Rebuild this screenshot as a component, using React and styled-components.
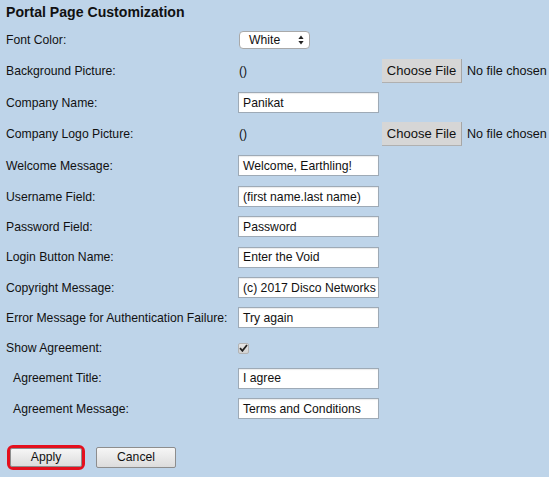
import styled, { createGlobalStyle } from 'styled-components';

const GlobalStyle = createGlobalStyle`
  html, body {
    margin: 0;
    padding: 0;
    background: #bed4e9;
  }
  body {
    font-family: "Liberation Sans", Arial, sans-serif;
    color: #111;
  }
`;

const Page = styled.div`
  width: 549px;
  height: 477px;
  box-sizing: border-box;
  padding: 3px 0 0 6px;
  overflow: hidden;
`;

const Title = styled.h1`
  margin: 0;
  font-size: 14.1px;
  font-weight: bold;
  line-height: 18px;
`;

const Form = styled.div`
  margin-top: 3px;
  display: grid;
  grid-template-columns: 233px 1fr;
`;

const Row = styled.div`
  display: contents;
`;

const Label = styled.div`
  height: ${(p) => p.$h}px;
  display: flex;
  align-items: center;
  font-size: 12.2px;
  white-space: nowrap;
  padding-left: ${(p) => (p.$indent ? '7px' : '0')};
`;

const Value = styled.div`
  height: ${(p) => p.$h}px;
  display: flex;
  align-items: center;
  font-size: 12.2px;
`;

const TextBox = styled.div`
  width: 141px;
  height: 21px;
  box-sizing: border-box;
  margin-left: -1px;
  background: #fff;
  border: 1px solid #9eaab6;
  box-shadow: inset 0 1px 1px rgba(0, 0, 0, 0.08);
  padding: 0 4px;
  display: flex;
  align-items: center;
  font-size: 12.2px;
  white-space: nowrap;
  overflow: hidden;
`;

const Select = styled.div`
  width: 71px;
  height: 18px;
  box-sizing: border-box;
  background: #fff;
  border: 1px solid #a9a9a9;
  border-radius: 4px;
  display: flex;
  align-items: center;
  justify-content: space-between;
  padding: 0 5px 0 9px;
  font-size: 12.2px;
`;

const Empty = styled.span`
  width: 143px;
`;

const FileButton = styled.div`
  width: 80px;
  height: 24px;
  box-sizing: border-box;
  background: #d6d6d6;
  border-right: 1px solid #a6a6a6;
  border-bottom: 1px solid #b0b0b0;
  display: flex;
  align-items: center;
  justify-content: center;
  font-size: 13px;
`;

const FileText = styled.span`
  margin-left: 5px;
  font-size: 12.6px;
  white-space: nowrap;
`;

const Check = styled.div`
  width: 11px;
  height: 11px;
  box-sizing: border-box;
  margin-left: -1px;
  border: 1px solid #b4b4b4;
  border-radius: 2px;
  background: linear-gradient(#e6e6e6, #d2d2d2);
  display: flex;
  align-items: center;
  justify-content: center;
`;

const Actions = styled.div`
  display: flex;
  align-items: center;
  gap: 11px;
  margin-top: 21px;
  margin-left: 1px;
`;

const Ring = styled.div`
  border: 3px solid #e4101e;
  border-radius: 6px;
`;

const Button = styled.div`
  width: ${(p) => p.$w}px;
  height: ${(p) => p.$h || 21}px;
  box-sizing: border-box;
  border: 1px solid #8d8d8d;
  border-radius: 2px;
  background: linear-gradient(#f6f6f6, #dcdcdc);
  display: flex;
  align-items: center;
  justify-content: center;
  font-size: 12.2px;
`;

const Arrows = () => (
  <svg width="6" height="10" viewBox="0 0 6 10">
    <path d="M3 0.5 L5.6 4 H0.4 Z" fill="#222" />
    <path d="M3 9.5 L5.6 6 H0.4 Z" fill="#222" />
  </svg>
);

const Tick = () => (
  <svg width="9" height="8" viewBox="0 0 9 8">
    <path d="M1 4.2 L3.4 6.8 L8 1" fill="none" stroke="#222" strokeWidth="1.8" />
  </svg>
);

const FileControl = () => (
  <>
    <Empty>()</Empty>
    <FileButton>Choose File</FileButton>
    <FileText>No file chosen</FileText>
  </>
);

const fields = [
  { label: 'Font Color:', select: 'White' },
  { label: 'Background Picture:', file: true },
  { label: 'Company Name:', value: 'Panikat' },
  { label: 'Company Logo Picture:', file: true },
  { label: 'Welcome Message:', value: 'Welcome, Earthling!' },
  { label: 'Username Field:', value: '(first name.last name)' },
  { label: 'Password Field:', value: 'Password' },
  { label: 'Login Button Name:', value: 'Enter the Void' },
  { label: 'Copyright Message:', value: '(c) 2017 Disco Networks' },
  { label: 'Error Message for Authentication Failure:', value: 'Try again' },
  { label: 'Show Agreement:', check: true },
  { label: 'Agreement Title:', value: 'I agree', indent: true },
  { label: 'Agreement Message:', value: 'Terms and Conditions', indent: true },
];

const renderValue = (f) => {
  if (f.select) {
    return (
      <Select>
        {f.select}
        <Arrows />
      </Select>
    );
  }
  if (f.file) return <FileControl />;
  if (f.check) {
    return (
      <Check>
        <Tick />
      </Check>
    );
  }
  return <TextBox>{f.value}</TextBox>;
};

const App = () => {
  return (
    <Page>
      <GlobalStyle />
      <Title>Portal Page Customization</Title>
      <Form>
        {fields.map((f, i) => {
          const h = i < 5 ? 31.5 : 30.3;
          return (
            <Row key={f.label}>
              <Label $h={h} $indent={f.indent}>
                {f.label}
              </Label>
              <Value $h={h}>{renderValue(f)}</Value>
            </Row>
          );
        })}
      </Form>
      <Actions>
        <Ring>
          <Button $w={72} $h={19}>
            Apply
          </Button>
        </Ring>
        <Button $w={80}>Cancel</Button>
      </Actions>
    </Page>
  );
};

export default App;
